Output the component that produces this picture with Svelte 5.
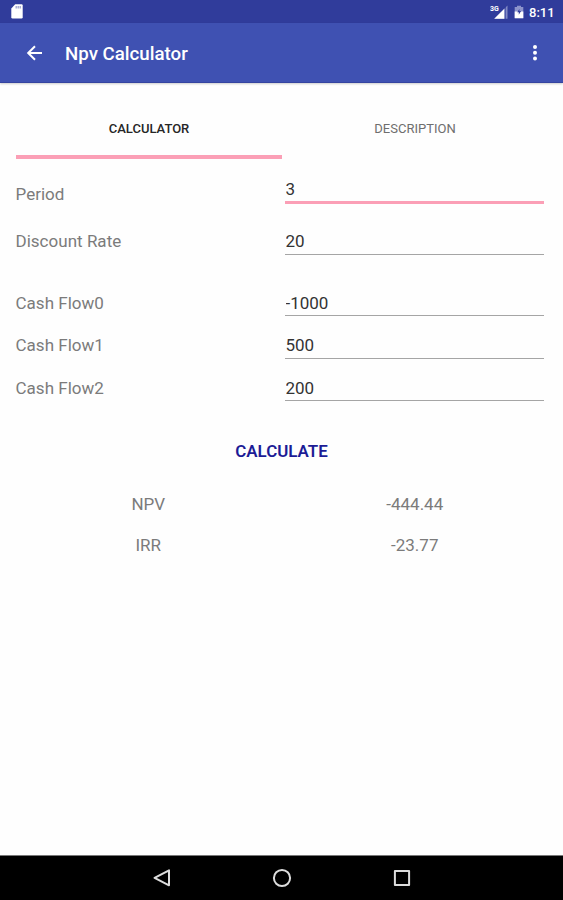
<script>
  let period = $state('3');
  let rate = $state('20');
  let flows = $state(['-1000', '500', '200']);
  const results = [
    { name: 'NPV', value: '-444.44' },
    { name: 'IRR', value: '-23.77' }
  ];
</script>

<div class="screen">
  <div class="status">
    <svg class="sd" width="12" height="15" viewBox="0 0 12 15">
      <path d="M4.2.3h6.3q1.2 0 1.2 1.2v11.8q0 1.3-1.2 1.3H1.6q-1.3 0-1.3-1.3V4.4z" fill="#fff" />
      <path d="M5.2 2v2.4M7.2 2v2.4M9.2 2v2.4" stroke="#9ba1cd" stroke-width="1.3" />
    </svg>
    <div class="indicators">
      <svg width="18" height="15" viewBox="0 0 18 15">
        <path d="M17.5 .5v13.3H4.5z" fill="#8189c5" />
        <path d="M14.6 3.5v10.3H4.2z" fill="#fff" />
        <path d="M14.6 1h1v13h-1z" fill="#303c9b" />
        <path d="M0 0h9.4v6H0z" fill="#303c9b" />
        <text x="0" y="5.6" font-size="7" font-weight="700" fill="#fff">3G</text>
      </svg>
      <svg class="battery" width="10" height="14" viewBox="0 0 10 14">
        <path d="M3 .8h4V2h2.3v11.2H.7V2H3z" fill="#8d94cb" />
        <path d="M.7 6.5h8.6v6.7H.7z" fill="#fff" />
        <path d="M5.4 4 3.2 7.3h1.6v2.4l2.3-3.6H5.4z" fill="#303c9b" />
      </svg>
      <span class="clock">8:11</span>
    </div>
  </div>

  <header>
    <svg class="back" width="18" height="16" viewBox="0 0 18 16">
      <path d="M16 8H2.5M9 1.3 2.2 8 9 14.7" fill="none" stroke="#fff" stroke-width="2" />
    </svg>
    <h1>Npv Calculator</h1>
    <svg class="more" width="6" height="18" viewBox="0 0 6 18">
      <circle cx="3" cy="3" r="2" fill="#fff" />
      <circle cx="3" cy="8.8" r="2" fill="#fff" />
      <circle cx="3" cy="14.6" r="2" fill="#fff" />
    </svg>
  </header>

  <main>
    <nav>
      <button class="tab active">CALCULATOR</button>
      <button class="tab">DESCRIPTION</button>
    </nav>

    <label class="row period"><span>Period</span><input class="focused" bind:value={period} /></label>
    <label class="row rate"><span>Discount Rate</span><input bind:value={rate} /></label>
    <div class="flows">
      {#each flows as _, i}
        <label class="row"><span>Cash Flow{i}</span><input bind:value={flows[i]} /></label>
      {/each}
    </div>

    <button class="calculate">CALCULATE</button>

    {#each results as result}
      <div class="result"><span>{result.name}</span><span>{result.value}</span></div>
    {/each}
  </main>

  <footer>
    <svg width="18" height="18" viewBox="0 0 18 18"><path d="M16 1.3v15L1.6 8.8z" /></svg>
    <svg width="20" height="20" viewBox="0 0 20 20"><circle cx="10" cy="10" r="8.1" /></svg>
    <svg width="18" height="18" viewBox="0 0 18 18"><rect x="1.9" y="1.9" width="14.2" height="14.2" /></svg>
  </footer>
</div>

<style>
  :global(body) { margin: 0; background: #fefefe; }
  .screen {
    display: flex;
    flex-direction: column;
    width: 563px;
    height: 900px;
    background: #fefefe;
    font-family: Roboto, 'Liberation Sans', sans-serif;
    overflow: hidden;
  }
  .status {
    display: flex;
    flex: none;
    justify-content: space-between;
    box-sizing: border-box;
    height: 23px;
    padding: 4px 8px 0 11px;
    background: #303c9b;
  }
  .indicators { display: flex; gap: 6px; align-items: flex-start; }
  .indicators svg { margin-top: 1px; }
  .clock { width: 26px; margin-left: -1px; color: #fff; font-size: 13px; font-weight: 500; line-height: 17px; white-space: nowrap; }
  header {
    display: flex;
    flex: none;
    align-items: center;
    box-sizing: border-box;
    height: 60px;
    padding: 0 25px 0 26px;
    background: #3f51b2;
    border-bottom: 1px solid #3544a0;
    box-shadow: 0 1px 2px #0003;
  }
  h1 { flex: 1; margin: 3px 0 0 21px; color: #fff; font-size: 18.7px; font-weight: 500; line-height: 24px; }
  .more { margin-top: 1px; }
  main { flex: 1; padding: 18px 15px 0; }
  nav { display: flex; height: 58px; padding-left: 1px; }
  button { border: 0; padding: 0; background: none; font-family: inherit; cursor: pointer; }
  .tab {
    flex: 1;
    box-sizing: border-box;
    border-bottom: 4px solid transparent;
    color: #6e6e6e;
    font-size: 13px;
    font-weight: 400;
  }
  .tab.active { border-bottom-color: #fb9fb6; color: #262626; font-weight: 500; }
  .row { display: flex; align-items: center; height: 42.5px; color: #7b7b7b; font-size: 17px; line-height: 20px; }
  .row > span { flex: none; width: 270px; padding: 2px 0 0 0.5px; box-sizing: border-box; letter-spacing: 0.02px; }
  input {
    box-sizing: border-box;
    width: 259px;
    height: 28px;
    margin-top: 1px;
    padding: 2px 0 0 0.5px;
    border: 0;
    border-bottom: 1px solid #a5a5a5;
    outline: 0;
    background: none;
    color: #333;
    font: 17px Roboto, 'Liberation Sans', sans-serif;
  }
  .focused { height: 29px; margin-top: -10px; border-bottom: 3px solid #fb9fb6; }
  .period { height: 70px; margin-bottom: -10px; }
  .period > span { padding-top: 0; }
  .rate { margin: 0 0 19px; }
  .calculate {
    display: block;
    width: 100%;
    height: 42px;
    margin-top: 22px;
    color: #1c1c96;
    font-size: 16.9px;
    font-weight: 600;
  }
  .result { display: flex; height: 41.5px; align-items: center; color: #7b7b7b; font-size: 17px; }
  .calculate + .result { margin-top: 11px; }
  .result span { flex: 1; text-align: center; }
  footer {
    display: flex;
    flex: none;
    align-items: center;
    justify-content: space-between;
    box-sizing: border-box;
    height: 45px;
    padding: 0 152px 0 153px;
    border-top: 1px solid #777;
    background: #000;
  }
  footer svg { fill: none; stroke: #ddd; stroke-width: 2; stroke-linejoin: round; }
</style>
